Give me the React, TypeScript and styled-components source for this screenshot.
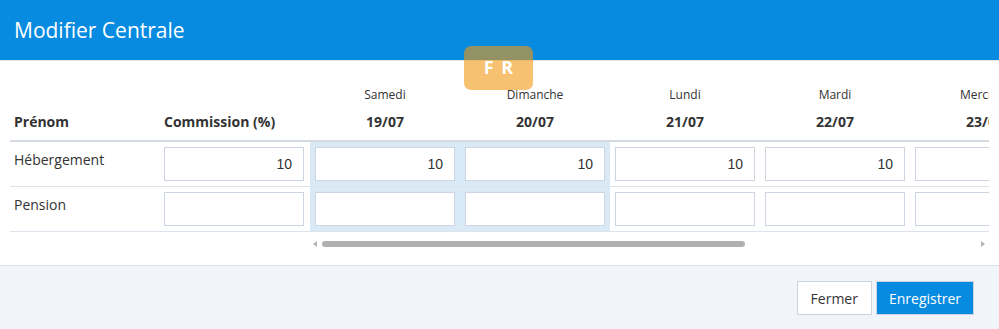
import React from "react";
import styled, { createGlobalStyle } from "styled-components";

const Global = createGlobalStyle`
  html, body { margin: 0; padding: 0; background: #fff; }
  body { font-family: "Open Sans", "Noto Sans", sans-serif; color: #333; }
  * { box-sizing: border-box; }
`;

const Modal = styled.div`
  position: relative;
  width: 999px;
  height: 329px;
  display: flex;
  flex-direction: column;
  overflow: hidden;
  background: #fff;
`;

const Header = styled.header`
  flex: none;
  height: 61px;
  background: #068be0;
  border-bottom: 1px solid #e2e6ea;
  display: flex;
  align-items: center;
  padding: 0 14px 1px;
`;

const Title = styled.h1`
  margin: 0;
  font-size: 21px;
  font-weight: 400;
  color: #fff;
  line-height: 26px;
`;

const Badge = styled.div`
  position: absolute;
  left: 464px;
  top: 46px;
  width: 69px;
  height: 44px;
  border-radius: 7px;
  background: rgba(240, 151, 18, 0.6);
  color: #fff;
  font-weight: 700;
  font-size: 18px;
  display: flex;
  align-items: center;
  justify-content: center;
  padding-bottom: 2px;
  word-spacing: 3px;
`;

const Body = styled.div`
  flex: 1;
  padding: 15px 10px 0;
`;

const Clip = styled.div`
  width: 979px;
  overflow: hidden;
`;

const Table = styled.table`
  table-layout: fixed;
  width: 1350px;
  border-collapse: separate;
  border-spacing: 0;
`;

const Col = styled.col`
  width: 150px;
`;

const DayHead = styled.th`
  height: 37px;
  padding: 0;
  font-size: 12px;
  font-weight: 400;
  text-align: center;
  vertical-align: middle;
  color: #333;
`;

const DateHead = styled.th<{ $left?: boolean }>`
  height: 29px;
  padding: 0 4px 9px;
  font-size: 14px;
  font-weight: 700;
  line-height: 18px;
  text-align: ${(p) => (p.$left ? "left" : "center")};
  vertical-align: top;
  border-bottom: 2px solid #d3dae2;
  color: #333;
`;

const LabelCell = styled.td`
  height: 45px;
  padding: 8px 4px 0;
  font-size: 14px;
  line-height: 20px;
  vertical-align: top;
  border-bottom: 1px solid #dde3ea;
  color: #333;
`;

const InputCell = styled.td<{ $hl?: boolean; $first?: boolean }>`
  height: 45px;
  padding: 5px;
  padding-left: ${(p) => (p.$first ? "4px" : "5px")};
  vertical-align: top;
  border-bottom: 1px solid #dde3ea;
  background: ${(p) => (p.$hl ? "#d9e9f6" : "transparent")};
`;

const NumInput = styled.input`
  display: block;
  width: 140px;
  height: 34px;
  border: 1px solid #cdd6e0;
  border-radius: 0;
  background: #fff;
  padding: 0 11px;
  text-align: right;
  font-family: "Liberation Sans", Arial, sans-serif;
  font-size: 14px;
  color: #333;
  outline: none;
`;

const ScrollRow = styled.div`
  display: flex;
  align-items: center;
  height: 24px;
  padding-left: 300px;
`;

const Track = styled.div`
  flex: 1;
  display: flex;
  align-items: center;
  height: 6px;
  padding: 0 3px;
`;

const ArrowLeft = styled.span`
  width: 0;
  height: 0;
  border-top: 3px solid transparent;
  border-bottom: 3px solid transparent;
  border-right: 4px solid #b4b4b4;
`;

const ArrowRight = styled.span`
  width: 0;
  height: 0;
  margin-left: auto;
  margin-right: 1px;
  border-top: 3px solid transparent;
  border-bottom: 3px solid transparent;
  border-left: 4px solid #b4b4b4;
`;

const Thumb = styled.span`
  margin-left: 5px;
  width: 423px;
  height: 6px;
  border-radius: 3px;
  background: #b0b0b0;
`;

const Footer = styled.footer`
  flex: none;
  height: 64px;
  border-top: 1px solid #dde3ea;
  background: #f1f5f9;
  display: flex;
  justify-content: flex-end;
  align-items: flex-start;
  gap: 4px;
  padding: 15px 25px 0 0;
`;

const Button = styled.button<{ $primary?: boolean }>`
  height: 34px;
  padding: 0 ${(p) => (p.$primary ? "12px" : "13px")};
  border: 1px solid ${(p) => (p.$primary ? "#c9d4de" : "#ccd5de")};
  border-radius: 0;
  background: ${(p) => (p.$primary ? "#078be0" : "#fff")};
  color: ${(p) => (p.$primary ? "#fff" : "#333")};
  font-family: "Open Sans", sans-serif;
  font-size: 14px;
  cursor: pointer;
`;

const days = [
  { name: "Samedi", date: "19/07", hl: true },
  { name: "Dimanche", date: "20/07", hl: true },
  { name: "Lundi", date: "21/07", hl: false },
  { name: "Mardi", date: "22/07", hl: false },
  { name: "Mercredi", date: "23/07", hl: false },
  { name: "Jeudi", date: "24/07", hl: false },
  { name: "Vendredi", date: "25/07", hl: false },
];

const rows = [
  { label: "Hébergement", commission: "10", values: ["10", "10", "10", "10", "", "", ""] },
  { label: "Pension", commission: "", values: ["", "", "", "", "", "", ""] },
];

export default function App() {
  return (
    <>
      <Global />
      <Modal>
        <Header>
          <Title>Modifier Centrale</Title>
        </Header>
        <Body>
          <Clip>
            <Table>
              <colgroup>
                <Col />
                <Col />
                {days.map((d) => (
                  <Col key={d.date} />
                ))}
              </colgroup>
              <thead>
                <tr>
                  <DayHead />
                  <DayHead />
                  {days.map((d) => (
                    <DayHead key={d.date}>{d.name}</DayHead>
                  ))}
                </tr>
                <tr>
                  <DateHead $left>Prénom</DateHead>
                  <DateHead $left>Commission (%)</DateHead>
                  {days.map((d) => (
                    <DateHead key={d.date}>{d.date}</DateHead>
                  ))}
                </tr>
              </thead>
              <tbody>
                {rows.map((r) => (
                  <tr key={r.label}>
                    <LabelCell>{r.label}</LabelCell>
                    <InputCell $first>
                      <NumInput defaultValue={r.commission} />
                    </InputCell>
                    {r.values.map((v, i) => (
                      <InputCell key={i} $hl={days[i].hl}>
                        <NumInput defaultValue={v} />
                      </InputCell>
                    ))}
                  </tr>
                ))}
              </tbody>
            </Table>
          </Clip>
          <ScrollRow>
            <Track>
              <ArrowLeft />
              <Thumb />
              <ArrowRight />
            </Track>
          </ScrollRow>
        </Body>
        <Footer>
          <Button>Fermer</Button>
          <Button $primary>Enregistrer</Button>
        </Footer>
        <Badge>F R</Badge>
      </Modal>
    </>
  );
}
